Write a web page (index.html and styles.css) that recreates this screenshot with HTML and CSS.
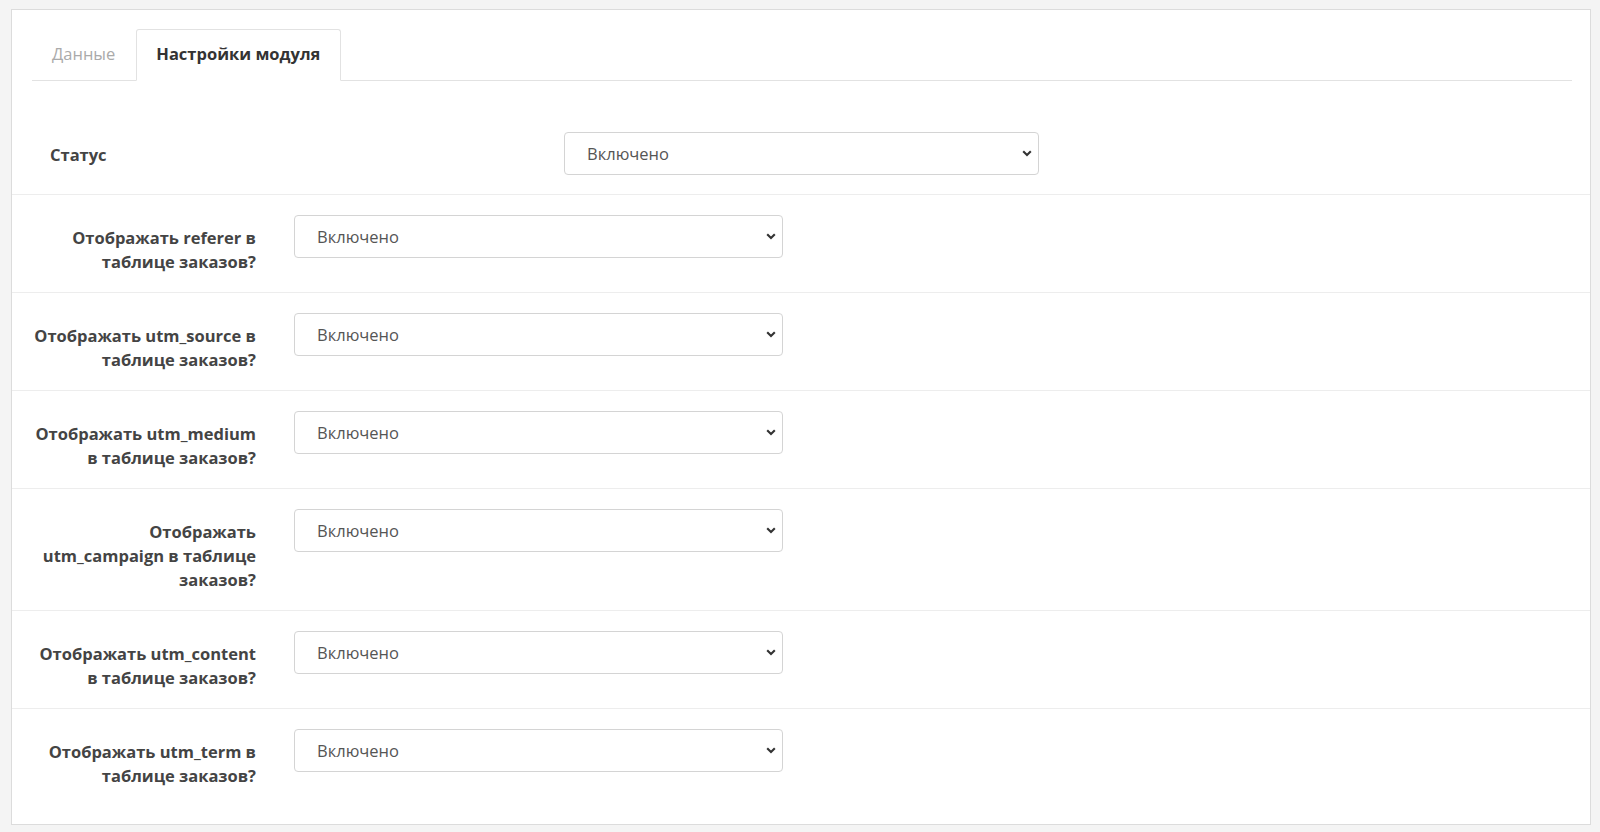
FILE: index.html
```html
<!DOCTYPE html>
<html>

<head>
    <title>Настройки модуля</title>
    <link rel="stylesheet" href="styles.css">
</head>
<body>
    <div class="panel">
        <ul class="tabs">
            <li class="tab">Данные</li>
            <li class="tab tab-active">Настройки модуля</li>
        </ul>

        <form class="settings">
            <div class="row row-status">
                <label class="label label-left" for="status">Статус</label>
                <div class="control control-wide">
                    <select id="status" class="select">
                        <option>Включено</option>
                        <option>Отключено</option>
                    </select>
                    <svg class="chevron" width="10" height="7" viewBox="0 0 10 7"><polyline points="1.2,1.2 5,5 8.8,1.2" fill="none" stroke="#333" stroke-width="2.1"/></svg>
                </div>
            </div>

            <div class="row">
                <label class="label" for="referer">Отображать referer в таблице заказов?</label>
                <div class="control">
                    <select id="referer" class="select">
                        <option>Включено</option>
                        <option>Отключено</option>
                    </select>
                    <svg class="chevron" width="10" height="7" viewBox="0 0 10 7"><polyline points="1.2,1.2 5,5 8.8,1.2" fill="none" stroke="#333" stroke-width="2.1"/></svg>
                </div>
            </div>

            <div class="row">
                <label class="label" for="utmSource">Отображать utm_source в таблице заказов?</label>
                <div class="control">
                    <select id="utmSource" class="select">
                        <option>Включено</option>
                        <option>Отключено</option>
                    </select>
                    <svg class="chevron" width="10" height="7" viewBox="0 0 10 7"><polyline points="1.2,1.2 5,5 8.8,1.2" fill="none" stroke="#333" stroke-width="2.1"/></svg>
                </div>
            </div>

            <div class="row">
                <label class="label" for="utmMedium">Отображать utm_medium в таблице заказов?</label>
                <div class="control">
                    <select id="utmMedium" class="select">
                        <option>Включено</option>
                        <option>Отключено</option>
                    </select>
                    <svg class="chevron" width="10" height="7" viewBox="0 0 10 7"><polyline points="1.2,1.2 5,5 8.8,1.2" fill="none" stroke="#333" stroke-width="2.1"/></svg>
                </div>
            </div>

            <div class="row">
                <label class="label" for="utmCampaign">Отображать utm_campaign в таблице заказов?</label>
                <div class="control">
                    <select id="utmCampaign" class="select">
                        <option>Включено</option>
                        <option>Отключено</option>
                    </select>
                    <svg class="chevron" width="10" height="7" viewBox="0 0 10 7"><polyline points="1.2,1.2 5,5 8.8,1.2" fill="none" stroke="#333" stroke-width="2.1"/></svg>
                </div>
            </div>

            <div class="row">
                <label class="label" for="utmContent">Отображать utm_content в таблице заказов?</label>
                <div class="control">
                    <select id="utmContent" class="select">
                        <option>Включено</option>
                        <option>Отключено</option>
                    </select>
                    <svg class="chevron" width="10" height="7" viewBox="0 0 10 7"><polyline points="1.2,1.2 5,5 8.8,1.2" fill="none" stroke="#333" stroke-width="2.1"/></svg>
                </div>
            </div>

            <div class="row">
                <label class="label" for="utmTerm">Отображать utm_term в таблице заказов?</label>
                <div class="control">
                    <select id="utmTerm" class="select">
                        <option>Включено</option>
                        <option>Отключено</option>
                    </select>
                    <svg class="chevron" width="10" height="7" viewBox="0 0 10 7"><polyline points="1.2,1.2 5,5 8.8,1.2" fill="none" stroke="#333" stroke-width="2.1"/></svg>
                </div>
            </div>
        </form>
    </div>
</body>
</html>
```

FILE: styles.css
```css
body
{
    margin: 0;
    padding: 9px 9px 8px 11px;
    background-color: #f4f4f4;
    font-family: 'Open Sans', sans-serif;
    font-size: 16.5px;
    color: #444;
}

.panel
{
    background-color: white;
    border: 1px solid #dcdcdc;
}

.tabs
{
    display: flex;
    list-style: none;
    margin: 19px 18px 0 20px;
    padding: 0;
    border-bottom: 1px solid #e2e2e2;
}

.tab
{
    padding: 12px 20px 14px 19px;
    line-height: 24px;
    margin-bottom: -1px;
    border: 1px solid transparent;
    border-radius: 3px 3px 0 0;
    color: #aaa;
}

.tab-active
{
    border-color: #e2e2e2;
    border-bottom-color: white;
    background-color: white;
    color: #333;
    font-weight: bold;
}

.settings
{
    padding: 31px 0 18px;
}

.row
{
    display: grid;
    grid-template-columns: 224px 489px;
    column-gap: 38px;
    align-items: start;
    padding: 20px 20px 18px;
    border-top: 1px solid #ededed;
}

.row-status
{
    grid-template-columns: 532px 475px;
    column-gap: 0;
    border-top: none;
    padding-bottom: 19px;
}

.label
{
    padding-top: 11px;
    line-height: 24px;
    font-weight: bold;
    text-align: right;
    color: #444;
}

.label-left
{
    text-align: left;
    padding-left: 18px;
}

.control
{
    position: relative;
}

.select
{
    display: block;
    width: 100%;
    height: 43px;
    padding: 0 30px 0 22px;
    border: 1px solid #d4d4d4;
    border-radius: 4px;
    background-color: white;
    font-family: 'Open Sans', sans-serif;
    font-size: 16.5px;
    color: #555;
    appearance: none;
}

.chevron
{
    position: absolute;
    right: 7px;
    top: 18px;
    pointer-events: none;
}
```
